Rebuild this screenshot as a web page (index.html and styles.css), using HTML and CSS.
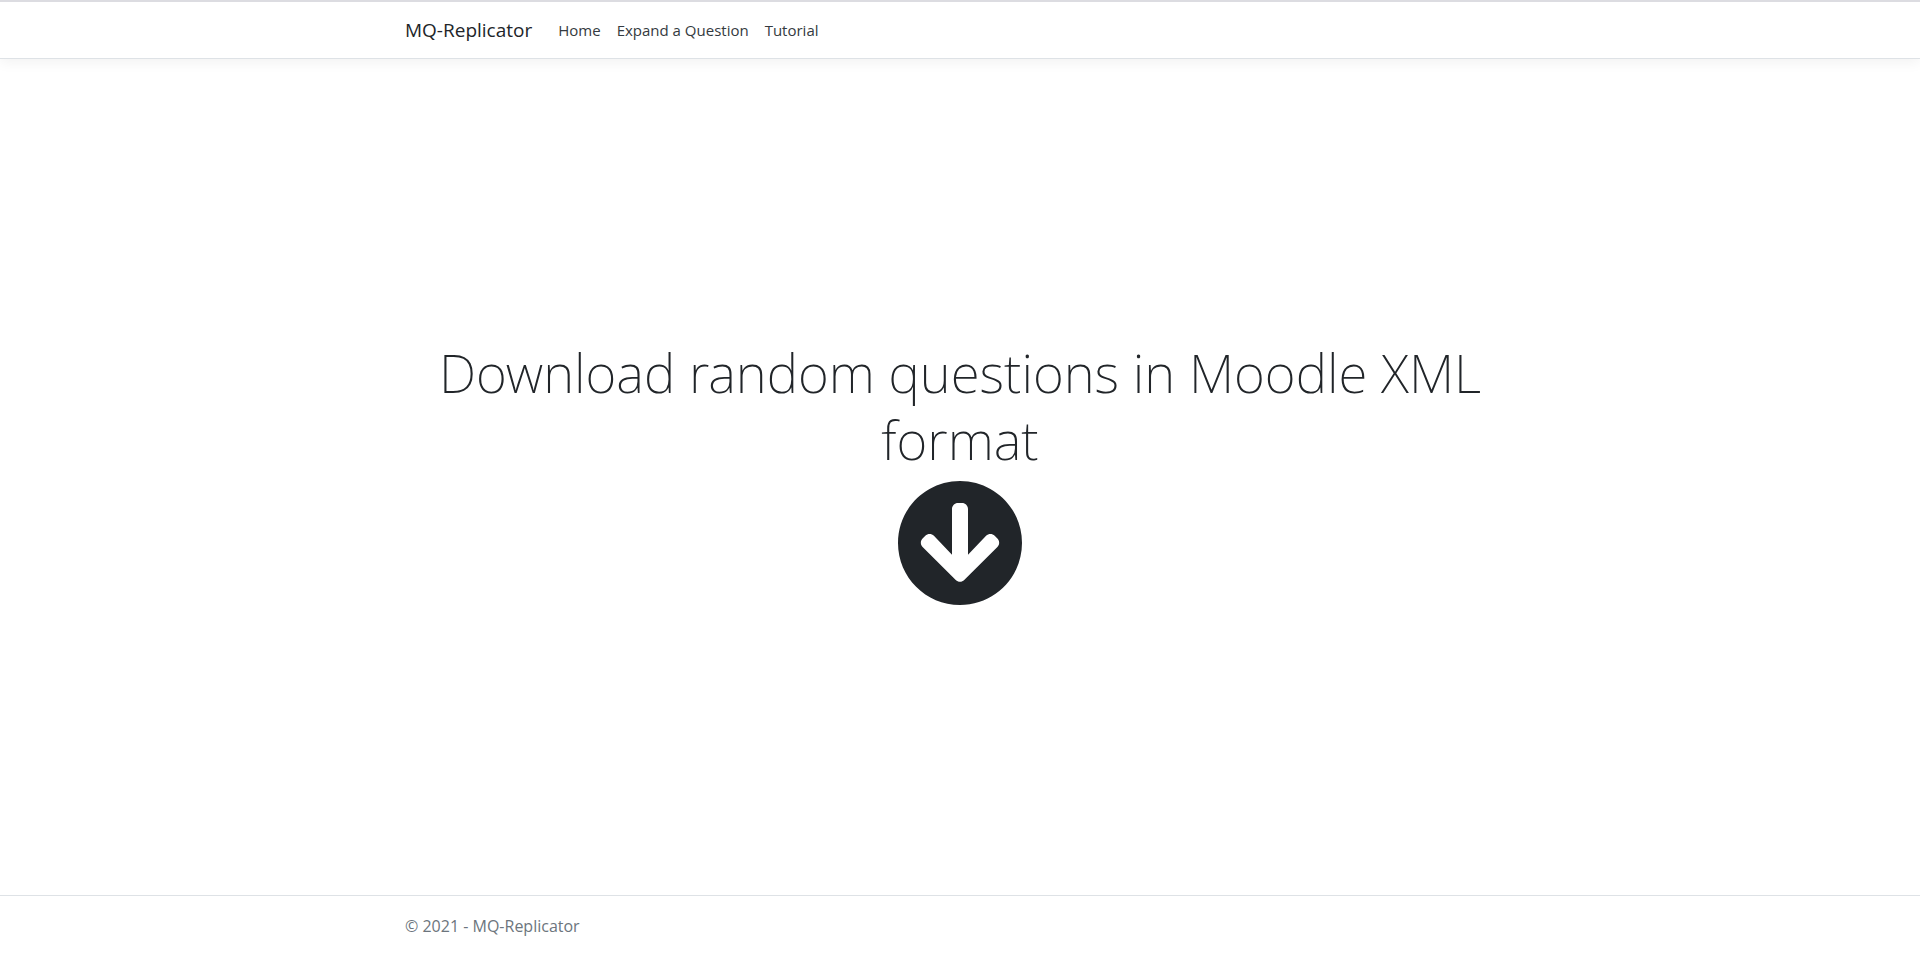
FILE: index.html
```html
<!DOCTYPE html>
<html lang="en">
<head>
<meta charset="utf-8">
<meta name="viewport" content="width=device-width, initial-scale=1">
<title>MQ-Replicator</title>
<link rel="stylesheet" href="styles.css">
</head>
<body>
<header class="site-header">
  <nav class="container navbar">
    <a class="brand" href="#">MQ-Replicator</a>
    <ul class="nav-list">
      <li><a class="nav-link" href="#">Home</a></li>
      <li><a class="nav-link" href="#">Expand a Question</a></li>
      <li><a class="nav-link" href="#">Tutorial</a></li>
    </ul>
  </nav>
</header>
<main class="container main">
  <h1 class="title">Download random questions in Moodle XML format</h1>
  <a class="download" href="#" aria-label="Download">
    <svg class="download-icon" viewBox="0 0 512 512" aria-hidden="true"><path d="M504 256c0 137-111 248-248 248S8 393 8 256 119 8 256 8s248 111 248 248zm-143.600-28.900L288 302.600V120c0-13.300-10.700-24-24-24h-16c-13.300 0-24 10.700-24 24v182.600l-72.400-75.500c-9.300-9.700-24.800-9.900-34.300-.4l-10.900 11c-9.400 9.400-9.400 24.600 0 33.900L239 404.300c9.400 9.400 24.600 9.400 33.900 0l132.700-132.700c9.400-9.400 9.400-24.600 0-33.900l-10.900-11c-9.500-9.500-25-9.300-34.300.4z"/></svg>
  </a>
</main>
<footer class="site-footer">
  <div class="container">© 2021 - MQ-Replicator</div>
</footer>
</body>
</html>
```

FILE: styles.css
```css
* { box-sizing: border-box; }

body {
  margin: 0;
  min-height: 100vh;
  display: flex;
  flex-direction: column;
  background: #fff;
  color: #212529;
  font-family: "Segoe UI", "Open Sans", "Noto Sans", sans-serif;
  font-size: 15px;
  line-height: 24px;
}

.container {
  width: 100%;
  max-width: 1140px;
  margin: 0 auto;
  padding: 0 15px;
}

.site-header {
  border-top: 2px solid #dcdce1;
  border-bottom: 1px solid #dee2e6;
  box-shadow: 0 4px 12px rgba(0, 0, 0, 0.05);
}

.navbar {
  display: flex;
  align-items: center;
  gap: 26px;
  min-height: 56px;
}

.brand {
  color: #212529;
  font-size: 19px;
  text-decoration: none;
}

.nav-list {
  display: flex;
  gap: 16px;
  margin: 0;
  padding: 0;
  list-style: none;
}

.nav-link {
  color: #343a40;
  text-decoration: none;
}

.main {
  flex: 1;
  display: flex;
  flex-direction: column;
  align-items: center;
  justify-content: center;
  padding-bottom: 8px;
}

.title {
  margin: 0;
  font-family: "Segoe UI", "Noto Sans", "Open Sans", sans-serif;
  font-size: 53px;
  font-weight: 250;
  line-height: 67px;
  text-align: center;
}

.download {
  display: block;
  margin-top: 6px;
  color: #212529;
}

.download-icon {
  display: block;
  width: 128px;
  height: 128px;
  fill: currentColor;
}

.site-footer {
  border-top: 1px solid #dee2e6;
  padding: 18px 0 15px;
  color: #6c757d;
  font-size: 16px;
}
```
